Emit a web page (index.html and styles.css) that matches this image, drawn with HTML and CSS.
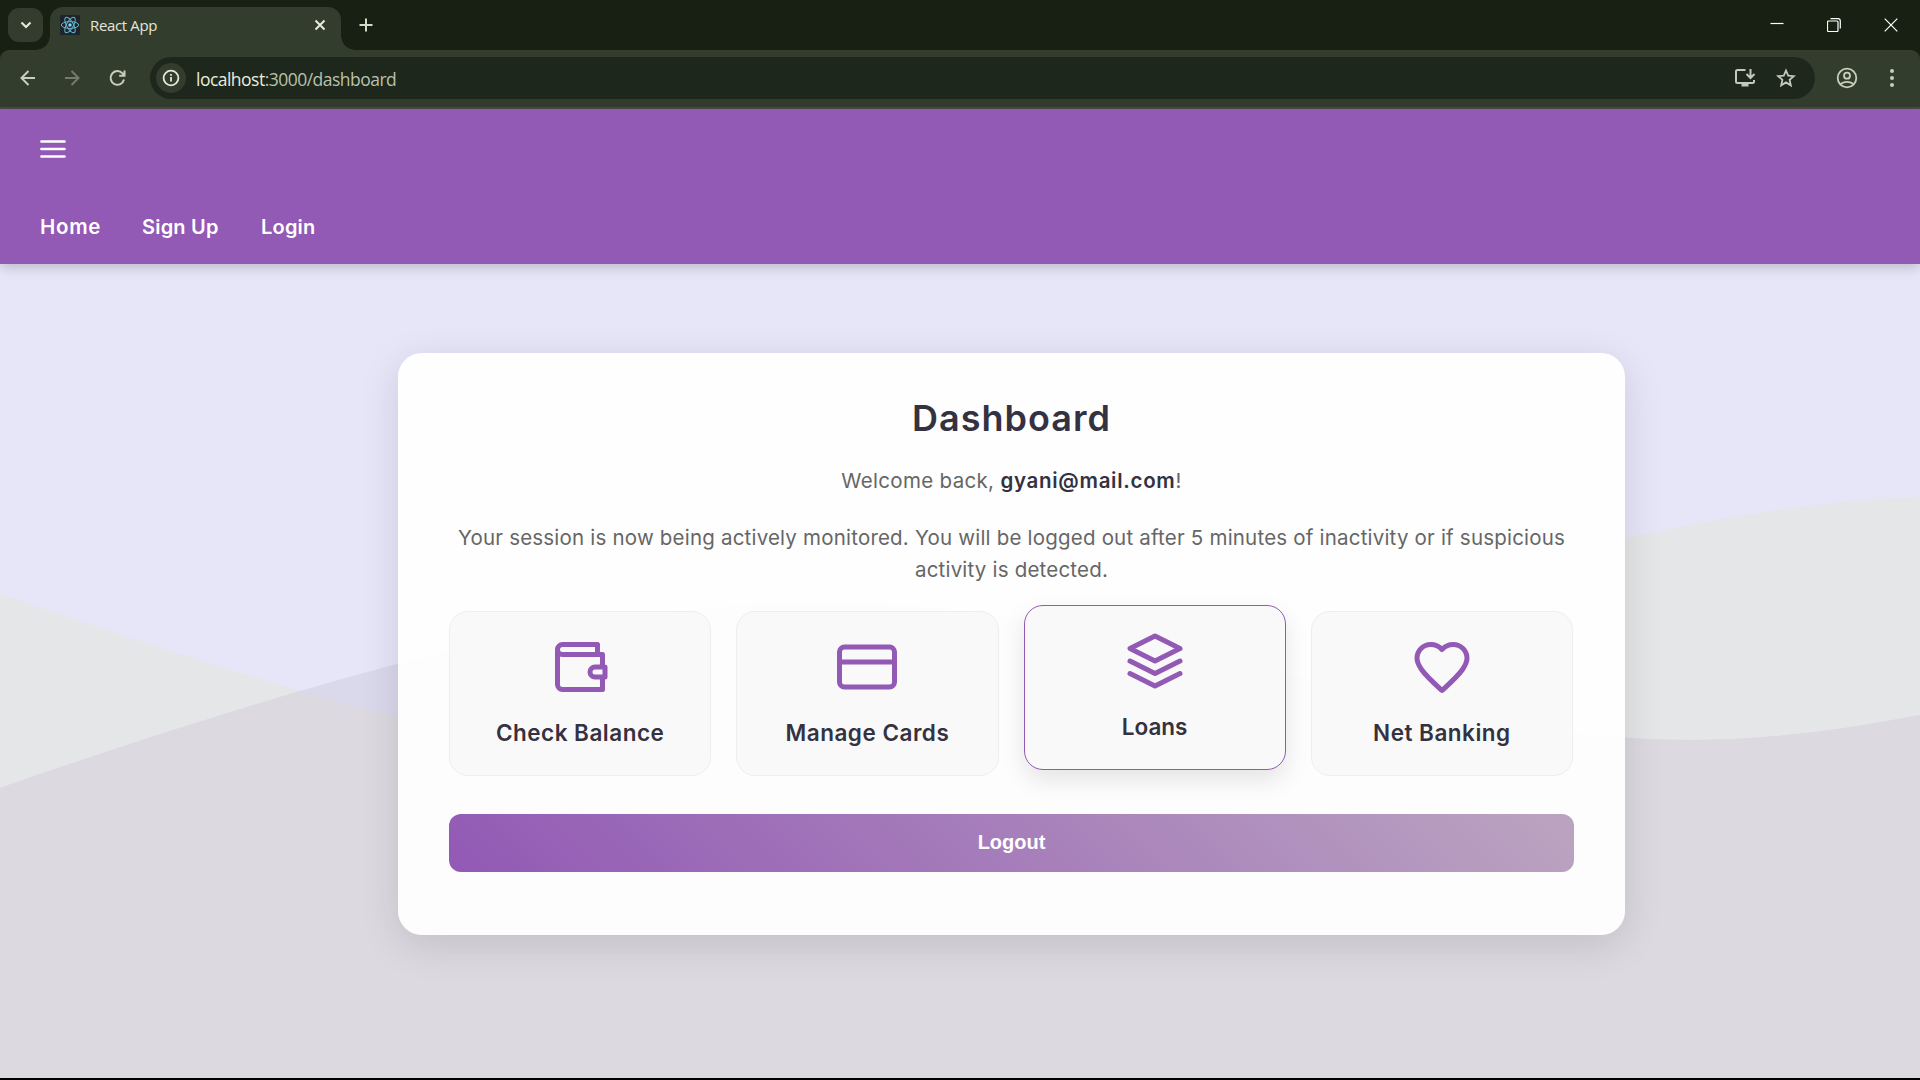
FILE: index.html
```html
<!DOCTYPE html>
<html lang="en">
<head>
<meta charset="utf-8">
<title>React App</title>
<link rel="stylesheet" href="styles.css">
</head>
<body>
<div class="browser">
  <div class="tabstrip">
    <div class="tab-search"><svg width="12" height="8" viewBox="0 0 12 8"><path d="M1.5 1.5 6 6l4.500-4.500"/></svg></div>
    <div class="tab">
      <svg class="favicon" width="20" height="20" viewBox="0 0 20 20"><rect width="20" height="20" rx="1.500" fill="#20232a"/><g fill="none" stroke="#61b6d0" stroke-width="1"><ellipse cx="10" cy="10" rx="8.700" ry="3.400"/><ellipse cx="10" cy="10" rx="8.700" ry="3.400" transform="rotate(60 10 10)"/><ellipse cx="10" cy="10" rx="8.700" ry="3.400" transform="rotate(120 10 10)"/></g><circle cx="10" cy="10" r="1.700" fill="#7fd8f0"/></svg>
      <span class="tab-title">React App</span>
      <svg class="tab-close" width="12" height="12" viewBox="0 0 12 12"><path d="m1.500 1.500 9 9m0-9-9 9"/></svg>
    </div>
    <svg class="new-tab" width="14" height="14" viewBox="0 0 14 14"><path d="M7 .5v13M.5 7h13"/></svg>
    <div class="window-buttons">
      <svg width="14" height="14" viewBox="0 0 14 14"><path d="M.5 5.500h13"/></svg>
      <svg width="14" height="14" viewBox="0 0 14 14"><rect x=".5" y="3" width="10.500" height="10.500" rx="1"/><path d="M3.500.7h7.500q2.300 0 2.300 2.300v7.500"/></svg>
      <svg width="14" height="14" viewBox="0 0 14 14"><path d="m.7.7 12.600 12.600m0-12.600L.7 13.300"/></svg>
    </div>
  </div>
  <div class="toolbar">
    <svg class="nav-icon" width="20" height="20" viewBox="0 0 20 20"><path d="M17 10H3.500m7-7-7 7 7 7"/></svg>
    <svg class="nav-icon disabled" width="20" height="20" viewBox="0 0 20 20"><path d="M2 10h13.500m-7-7 7 7-7 7"/></svg>
    <svg class="nav-icon" width="20" height="20" viewBox="0 0 20 20"><path d="M16 11.500A6.800 6.800 0 1 1 14.500 5.400l1.800 2M16.500 2.500v5.300h-5.300"/></svg>
    <div class="omnibox">
      <div class="site-info"><svg width="18" height="18" viewBox="0 0 18 18"><circle cx="9" cy="9" r="7.400"/><path d="M9 8v4.500M9 5v1.700"/></svg></div>
      <div class="url"><span class="url-host">localhost</span>:3000/dashboard</div>
      <svg class="install" width="22" height="20" viewBox="0 0 22 20"><path d="M11.500 2H3.500Q2 2 2 3.500v10Q2 15 3.500 15h15q1.500 0 1.500-1.500V12M16.500 1v8.500m-4-3.500 4 4 4-4"/><path class="solid" d="M7.500 15h7v3.500h-7z"/></svg>
      <svg class="star" width="20" height="20" viewBox="0 0 20 20"><path d="m10 2.500 2.200 5.100 5.600.5-4.200 3.700 1.200 5.500-4.800-2.900-4.800 2.900 1.200-5.500-4.200-3.700 5.600-.5z"/></svg>
    </div>
    <svg class="profile" width="22" height="22" viewBox="0 0 22 22"><circle cx="11" cy="11" r="9.300"/><circle cx="11" cy="8.700" r="3"/><path d="M4.500 17q6.500-4.300 13 0"/></svg>
    <svg class="more" width="6" height="20" viewBox="0 0 6 20"><circle cx="3" cy="3" r="2"/><circle cx="3" cy="10" r="2"/><circle cx="3" cy="17" r="2"/></svg>
  </div>
  <div class="page">
    <svg class="waves" width="1920" height="969" viewBox="0 109 1920 969" preserveAspectRatio="none">
      <defs>
        <path id="wave-back" d="M0 594C100 628 200 662 300 691C480 742 660 775 860 750C1130 716 1340 600 1625 538C1725 517 1820 500 1920 497V1078H0Z"/>
        <path id="wave-front" d="M0 788C100 753 200 721 300 691C480 638 660 597 860 603C1100 610 1290 685 1500 722C1650 748 1760 746 1920 715V1078H0Z"/>
        <clipPath id="overlap"><use href="#wave-back"/></clipPath>
      </defs>
      <use href="#wave-back" fill="#e4e6e7"/>
      <use href="#wave-front" fill="#dad8eb"/>
      <use href="#wave-front" fill="#dcd9e0" clip-path="url(#overlap)"/>
    </svg>
    <header class="navbar">
      <svg class="hamburger" width="26" height="20" viewBox="0 0 26 20"><path d="M1.500 2.500h23M1.500 10h23M1.500 17.500h23"/></svg>
      <nav class="links"><a class="link-home">Home</a><a class="link-signup">Sign Up</a><a class="link-login">Login</a></nav>
    </header>
    <main class="panel">
      <h1 class="title">Dashboard</h1>
      <p class="welcome">Welcome back, <strong>gyani@mail.com</strong>!</p>
      <p class="session">Your session is now being actively monitored. You will be logged out after 5 minutes of inactivity or if suspicious<br>activity is detected.</p>
      <div class="cards">
        <div class="card"><svg class="icon" viewBox="0 0 24 24"><path d="M21 12V7H5a2 2 0 0 1 0-4h14v4M3 5v14a2 2 0 0 0 2 2h16v-5M18 12a2 2 0 0 0 0 4h4v-4Z"/></svg><span class="label">Check Balance</span></div>
        <div class="card"><svg class="icon" viewBox="0 0 24 24"><rect x="1" y="4" width="22" height="16" rx="2"/><path d="M1 10h22"/></svg><span class="label">Manage Cards</span></div>
        <div class="card active"><svg class="icon" viewBox="0 0 24 24"><path d="M12 2 2 7l10 5 10-5ZM2 17l10 5 10-5M2 12l10 5 10-5"/></svg><span class="label">Loans</span></div>
        <div class="card"><svg class="icon" viewBox="0 0 24 24"><path d="M12 21.400C8.500 18.200 5.600 15.600 3.800 13C2.600 11.200 2 9.900 2 8.500A5.500 5.500 0 0 1 7.500 3C9.300 3 10.700 3.600 12 5C13.300 3.600 14.700 3 16.500 3A5.500 5.500 0 0 1 22 8.500C22 9.900 21.400 11.200 20.200 13C18.400 15.600 15.500 18.200 12 21.400Z"/></svg><span class="label">Net Banking</span></div>
      </div>
      <button class="logout">Logout</button>
    </main>
  </div>
  <div class="screen-edge"></div>
</div>
</body>
</html>
```
FILE: styles.css
```css
* { box-sizing: border-box; }
body {
  margin: 0;
  width: 1920px;
  height: 1080px;
  overflow: hidden;
  font-family: Inter, "Noto Sans", sans-serif;
  background: #182013;
}
svg { display: block; flex: none; fill: none; }
.browser { display: flex; flex-direction: column; height: 1080px; }

/* Browser chrome */
.tabstrip { display: flex; height: 50px; padding-left: 8px; background: #182013; }
.tab-search {
  display: flex; align-items: center; justify-content: center;
  width: 35px; height: 34px; margin-top: 8px;
  border-radius: 11px; background: #333d2e;
}
.tab-search svg { stroke: #e2e8d8; stroke-width: 2.2; }
.tab {
  position: relative;
  display: flex; align-items: center;
  width: 291px; height: 43px; margin: 7px 0 0 7px; padding: 0 15px 7px 10px;
  border-radius: 13px 13px 0 0; background: #333d2e;
}
.tab::before, .tab::after {
  content: ""; position: absolute; bottom: 0; width: 14px; height: 14px;
}
.tab::before { left: -14px; background: radial-gradient(circle at 0 0, transparent 13.5px, #333d2e 14px); }
.tab::after { right: -14px; background: radial-gradient(circle at 100% 0, transparent 13.5px, #333d2e 14px); }
.tab-title { margin-left: 10px; font: 15px/20px "Open Sans", "Noto Sans", sans-serif; letter-spacing: -.35px; color: #e2e5da; }
.tab-close { margin-left: auto; stroke: #e8ecdf; stroke-width: 2; }
.new-tab { margin: 18px 0 0 18px; stroke: #d3dcc8; stroke-width: 2; }
.window-buttons { display: flex; gap: 43px; margin: 18px 22px 0 auto; }
.window-buttons svg { stroke: #fff; stroke-width: 1.2; }
.toolbar {
  display: flex; align-items: center;
  height: 59px; padding: 0 25px 2px 18px;
  border-bottom: 2px solid #484d44; border-radius: 9px 9px 0 0; background: #333d2e;
}
.nav-icon { margin-right: 25px; stroke: #c6d0ba; stroke-width: 2; }
.nav-icon.disabled { stroke: #747c6c; }
.omnibox {
  display: flex; align-items: center; flex: 1;
  height: 42px; margin-left: -3px; padding: 0 19px 0 6px;
  border-radius: 21px; background: #1e271b;
}
.site-info {
  display: flex; align-items: center; justify-content: center;
  width: 30px; height: 30px; border-radius: 50%; background: #333d2e;
}
.site-info svg { stroke: #e2e8d8; stroke-width: 1.8; }
.url { margin: 2px 0 0 10px; font: 17.5px/24px "Open Sans", "Noto Sans", sans-serif; letter-spacing: -.52px; color: #b9c1ad; white-space: nowrap; }
.url-host { color: #e8ecdf; }
.install { margin-left: auto; stroke: #c3c9bb; stroke-width: 2; }
.install .solid { fill: #c3c9bb; stroke: none; }
.star { margin-left: 20px; stroke: #c3c9bb; stroke-width: 1.8; }
.profile { margin-left: 21px; stroke: #c6d0ba; stroke-width: 1.8; }
.more { margin-left: 31px; fill: #c6d0ba; }

/* Page */
.page { position: relative; flex: 1; background: #e7e6f9; }
.waves { position: absolute; inset: 0; }
.navbar {
  position: relative;
  display: flex; flex-direction: column;
  height: 155px; padding: 30px 40px 0;
  background: #9259b5; box-shadow: 0 3px 12px rgba(0, 0, 0, .2);
}
.hamburger { stroke: #fff; stroke-width: 2.7; stroke-linecap: round; }
.links { display: flex; margin-top: 53px; font-size: 20px; line-height: 30px; font-weight: 600; letter-spacing: .2px; color: #fff; }
.link-home { width: 102px; font-size: 20.5px; letter-spacing: .7px; }
.link-signup { width: 119px; }
.panel {
  position: relative;
  width: 1227px; height: 582px; margin: 89px 0 0 398px; padding: 40px 51px 0;
  border-radius: 24px; background: rgba(255, 255, 255, .95);
  box-shadow: 0 10px 40px rgba(0, 0, 0, .12);
  text-align: center; color: #666;
}
.title { margin: 0; font-size: 36px; line-height: 51px; font-weight: 600; letter-spacing: 1px; color: #343241; }
.welcome { margin: 21px 0 0; font-size: 20.5px; line-height: 32px; letter-spacing: .32px; }
.welcome strong { font-weight: 600; letter-spacing: .7px; color: #343241; }
.session { margin: 25px 0 0; font-size: 20.5px; line-height: 32px; letter-spacing: .2px; white-space: nowrap; }
.cards { display: grid; grid-template-columns: repeat(4, 1fr); gap: 25px; margin: 25px 1px 0 0; }
.card {
  display: flex; flex-direction: column; align-items: center;
  height: 165px; padding-top: 25px;
  border: 1px solid #eee; border-radius: 19px; background: #f9f9f9;
}
.card.active { border-color: #9259b5; box-shadow: 0 10px 25px rgba(0, 0, 0, .1); transform: translateY(-6px); }
.icon { width: 60px; height: 60px; stroke: #9259b5; stroke-width: 2; stroke-linecap: round; stroke-linejoin: round; }
.label { margin-top: 18px; font-size: 22.5px; line-height: 35px; font-weight: 600; letter-spacing: .5px; color: #343241; }
.active .label { letter-spacing: 0; }
.logout {
  display: block; width: 100%; height: 58px; margin-top: 38px; padding: 0 0 2px; border: 0; border-radius: 12px;
  background: linear-gradient(45deg, #9259b5, #bba4c0);
  font: bold 20px "Liberation Sans", Arial, sans-serif; color: #fff;
}
.screen-edge { height: 2px; background: #000; }
```
